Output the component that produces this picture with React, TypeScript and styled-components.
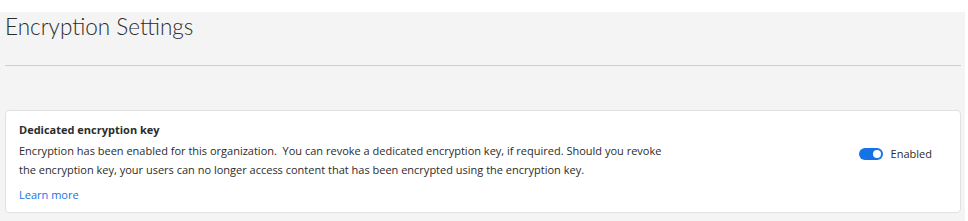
import React from 'react';
import styled, { createGlobalStyle } from 'styled-components';

const GlobalStyle = createGlobalStyle`
  html, body {
    margin: 0;
    padding: 0;
    background: #ffffff;
  }
  body {
    font-family: 'Open Sans', 'Noto Sans', sans-serif;
    color: #2c2c2c;
  }
`;

const Page = styled.div`
  margin-top: 12px;
  width: 965px;
  height: 209px;
  background: #f4f4f4;
  box-sizing: border-box;
  padding: 0 4px 0 5px;
`;

const Title = styled.h1`
  margin: 0;
  padding-top: 1px;
  font-family: 'Lato', sans-serif;
  font-weight: 300;
  font-size: 22.5px;
  line-height: 28px;
  color: #2c2c2c;
`;

const Divider = styled.hr`
  margin: 24px 0 0 0;
  border: 0;
  border-top: 1px solid #cfcfcf;
`;

const Card = styled.section`
  margin-top: 44px;
  background: #ffffff;
  border: 1px solid #e1e1e1;
  border-radius: 4px;
  height: 103px;
  box-sizing: border-box;
  padding: 10px 13px 0 13px;
  display: flex;
  justify-content: space-between;
`;

const CardBody = styled.div`
  display: flex;
  flex-direction: column;
`;

const CardTitle = styled.h2`
  margin: 0;
  font-size: 11px;
  font-weight: 700;
  line-height: 17px;
  color: #2c2c2c;
`;

const CardText = styled.p`
  margin: 3px 0 0 0;
  width: 660px;
  font-size: 11px;
  line-height: 19px;
  color: #2c2c2c;
`;

const LearnMore = styled.a`
  margin-top: 7px;
  font-size: 11px;
  line-height: 17px;
  color: #1473e6;
  text-decoration: none;
`;

const SwitchRow = styled.label`
  display: flex;
  align-items: center;
  gap: 8px;
  margin: 24px 15px 0 0;
  height: 17px;
  font-size: 11px;
  color: #2c2c2c;
`;

const Track = styled.span<{ $on: boolean }>`
  position: relative;
  width: 24px;
  height: 12px;
  border-radius: 6px;
  background: ${(p) => (p.$on ? '#1473e6' : '#b3b3b3')};
`;

const Knob = styled.span<{ $on: boolean }>`
  position: absolute;
  top: 2px;
  left: ${(p) => (p.$on ? '14px' : '2px')};
  width: 8px;
  height: 8px;
  border-radius: 50%;
  background: #ffffff;
`;

const App = function () {
  const enabled = true;
  return (
    <>
      <GlobalStyle />
      <Page>
        <Title>Encryption Settings</Title>
        <Divider />
        <Card>
          <CardBody>
            <CardTitle>Dedicated encryption key</CardTitle>
            <CardText>
              Encryption has been enabled for this organization.&nbsp; You can revoke a dedicated encryption key, if required. Should you revoke the encryption key, your users can no longer access content that has been encrypted using the encryption key.
            </CardText>
            <LearnMore href="#">Learn more</LearnMore>
          </CardBody>
          <SwitchRow>
            <Track $on={enabled}>
              <Knob $on={enabled} />
            </Track>
            Enabled
          </SwitchRow>
        </Card>
      </Page>
    </>
  );
};

export default App;
